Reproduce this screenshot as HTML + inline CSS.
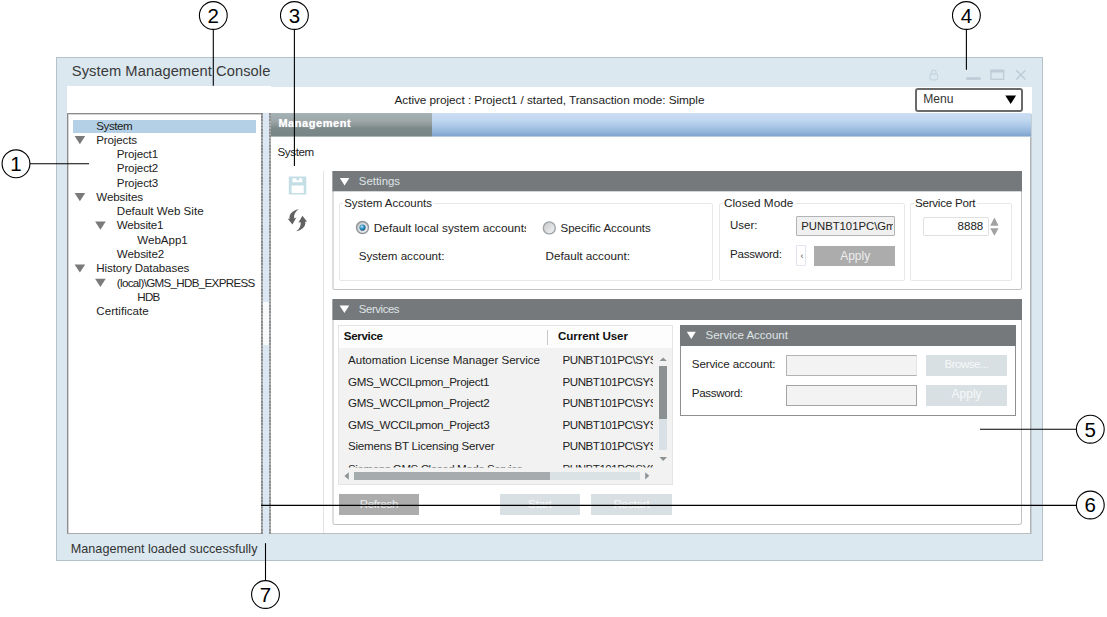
<!DOCTYPE html>
<html lang="en"><head><meta charset="utf-8"><title>System Management Console</title>
<style>
html,body{margin:0;padding:0;background:#fff;}
body{width:1107px;height:617px;position:relative;overflow:hidden;font-family:"Liberation Sans", sans-serif;}
body>div,.a{position:absolute;}
.t{position:absolute;white-space:pre;line-height:1;display:block;}
svg{display:block;overflow:visible;}
</style></head><body>
<div style="left:56px;top:57px;width:987px;height:503.5px;background:#dbe8f0;border:1px solid #b4c2cc;box-sizing:border-box;"></div>
<span class="t" style="left:71.8px;top:64px;font-size:14.7px;color:#3a3a3a;letter-spacing:0.073px;">System Management Console</span>
<svg class="a" style="left:925px;top:66px" width="106" height="18" viewBox="925 66 106 18">
<g fill="none" stroke="#c6d5e0" stroke-width="1.3">
<rect x="930" y="74" width="7.6" height="5.8" rx="1.5"/>
<path d="M931.6 74 v-1.6 a2.2 2.2 0 0 1 4.4 0 v1.6"/>
</g>
<rect x="966.3" y="77.2" width="14.3" height="2.7" fill="#bdccd7"/>
<rect x="991" y="71.6" width="12.6" height="7.7" fill="none" stroke="#bdccd7" stroke-width="1.3"/>
<rect x="990.3" y="69.5" width="14" height="2.8" fill="#bdccd7"/>
<path d="M1016.3 70.2 L1025.4 79.5 M1025.4 70.2 L1016.3 79.5" stroke="#bdccd7" stroke-width="1.4" fill="none"/>
</svg>
<div style="left:67px;top:86.5px;width:964.5px;height:27px;background:#fff;"></div>
<div style="left:67px;top:85.5px;width:204px;height:1.5px;background:#fff;"></div>
<span class="t" style="left:394.5px;top:95px;font-size:11.8px;color:#222;letter-spacing:-0.046px;">Active project : Project1 / started, Transaction mode: Simple</span>
<div style="left:915px;top:87.5px;width:108px;height:24px;background:#fff;border:2px solid #6a6a6a;border-radius:3px;box-sizing:border-box;"></div>
<span class="t" style="left:923.3px;top:93px;font-size:12.1px;color:#333;">Menu</span>
<svg class="a" style="left:1004px;top:94px" width="14" height="12" viewBox="1004 94 14 12"><path d="M1005.3 95.6 h10.8 l-5.4 8.4 z" fill="#000"/></svg>
<div style="left:67px;top:113px;width:195px;height:421px;background:#fff;border:1px solid #8c8c8c;border-bottom-color:#ababab;box-sizing:border-box;box-shadow:inset 1px 1px 0 #d4d4d4;"></div>
<div style="left:72.5px;top:119.5px;width:183px;height:13.2px;background:#b3d0e6;"></div>
<span class="t" style="left:96.3px;top:120px;font-size:11.6px;color:#222;letter-spacing:-0.471px;">System</span>
<span class="t" style="left:96.3px;top:134px;font-size:11.6px;color:#222;letter-spacing:-0.163px;">Projects</span>
<span class="t" style="left:116.8px;top:148px;font-size:11.6px;color:#222;letter-spacing:-0.176px;">Project1</span>
<span class="t" style="left:116.8px;top:162px;font-size:11.6px;color:#222;letter-spacing:-0.147px;">Project2</span>
<span class="t" style="left:116.8px;top:177px;font-size:11.6px;color:#222;letter-spacing:-0.147px;">Project3</span>
<span class="t" style="left:96.3px;top:191px;font-size:11.6px;color:#222;letter-spacing:-0.103px;">Websites</span>
<span class="t" style="left:116.8px;top:205px;font-size:11.6px;color:#222;">Default Web Site</span>
<span class="t" style="left:116.8px;top:219px;font-size:11.6px;color:#222;letter-spacing:-0.196px;">Website1</span>
<span class="t" style="left:137.3px;top:234px;font-size:11.6px;color:#222;letter-spacing:-0.036px;">WebApp1</span>
<span class="t" style="left:116.8px;top:248px;font-size:11.6px;color:#222;letter-spacing:-0.089px;">Website2</span>
<span class="t" style="left:96.3px;top:262px;font-size:11.6px;color:#222;letter-spacing:-0.108px;">History Databases</span>
<span class="t" style="left:116.8px;top:277px;font-size:11.6px;color:#222;letter-spacing:-0.675px;">(local)\GMS_HDB_EXPRESS</span>
<span class="t" style="left:137.3px;top:291px;font-size:11.6px;color:#222;letter-spacing:-0.742px;">HDB</span>
<span class="t" style="left:96.3px;top:305px;font-size:11.6px;color:#222;letter-spacing:0.030px;">Certificate</span>
<svg class="a" style="left:0;top:0" width="300" height="340" viewBox="0 0 300 340"><g fill="#7a7a7a"><path d="M74.6 136.0 h10.6 l-5.3 8.2 z"/><path d="M74.6 193.0 h10.6 l-5.3 8.2 z"/><path d="M95.1 221.6 h10.6 l-5.3 8.2 z"/><path d="M74.6 264.4 h10.6 l-5.3 8.2 z"/><path d="M95.1 278.7 h10.6 l-5.3 8.2 z"/></g></svg>
<div style="left:262px;top:113px;width:9px;height:421px;background:#dbe8f3;"></div>
<div style="left:263px;top:302.4px;width:6px;height:42.6px;background:#f7f9fb;"></div>
<div style="left:261px;top:113px;width:2px;height:421px;background:repeating-linear-gradient(#858585 0,#858585 1.6px,#a9a9a9 1.6px,#a9a9a9 3.2px);opacity:.9;"></div>
<div style="left:269px;top:113px;width:2px;height:421px;background:repeating-linear-gradient(#858585 0,#858585 1.6px,#a9a9a9 1.6px,#a9a9a9 3.2px);opacity:.9;"></div>
<div style="left:271px;top:113.5px;width:760px;height:420.5px;background:#fff;border-right:1px solid #b2b2b2;border-bottom:1px solid #bdbdbd;box-sizing:border-box;box-shadow:1px 0 0 rgba(170,175,180,.45);"></div>
<div style="left:271px;top:113px;width:760px;height:24px;background:linear-gradient(#cfe0f2 0,#c9ddf2 1px,#c3d9f0 6px,#abc8e7 13px,#8fb1d8 20px,#7fa3cc 23.2px,#b7c9df 23.2px);"></div>
<div style="left:271px;top:113px;width:160.6px;height:24px;background:linear-gradient(#aab6b9 0,#a3b1b5 1px,#9ea6a7 8px,#8e9898 12px,#7d8a8a 15px,#788585 23.2px,#aeb6b6 23.2px);"></div>
<span class="t" style="left:278.4px;top:118px;font-size:11px;color:#fff;font-weight:bold;letter-spacing:0.55px;text-shadow:0 0 1px #dfe6e6;">Management</span>
<span class="t" style="left:277.5px;top:146px;font-size:11.6px;color:#222;letter-spacing:-0.381px;">System</span>
<svg class="a" style="left:286px;top:174px" width="24" height="60" viewBox="286 174 24 60">
<path fill="#c4dee6" fill-rule="evenodd" d="M288.8 176.5 h17.5 v18.1 h-17.5 z M292.4 178.3 v4 h9.9 v-4 h-3.3 v1.9 h-2.6 v-1.9 z M291.6 185.6 v7.3 h12.1 v-7.3 z"/>
<g fill="#616161">
<path d="M298.6 209.2 C292 210.5 288.8 214.5 289.6 219 L287.6 218.6 L292.4 224.6 L296.4 217.6 L294.2 218.4 C293.6 214.8 295 211.8 298.6 209.2 Z"/>
<path d="M296.2 231.2 C302.8 229.9 306 225.9 305.2 221.4 L307.2 221.8 L302.4 215.8 L298.4 222.8 L300.6 222 C301.2 225.6 299.8 228.6 296.2 231.2 Z"/>
</g></svg>
<div style="left:323px;top:170.5px;width:707px;height:362.5px;border-left:1px solid #e4e4e4;"></div>
<div style="left:332px;top:170.5px;width:690px;height:119px;background:#fff;border:1px solid #c2c2c2;border-left:2px solid #dedede;box-sizing:border-box;border-radius:0 0 2px 2px;"></div>
<div style="left:332px;top:170.5px;width:690px;height:20.5px;background:linear-gradient(to right,rgba(117,121,123,.55) 0,rgba(117,121,123,.55) 1px,#75797b 1px);box-shadow:0 1px 0 rgba(117,121,123,.3);"></div>
<svg class="a" style="left:338px;top:176px" width="14" height="12" viewBox="338 176 14 12"><path d="M339.8 178 h9.6 l-4.8 7.4 z" fill="#fff"/></svg>
<span class="t" style="left:358.8px;top:176px;font-size:11.4px;color:#dfe4e7;letter-spacing:0.011px;">Settings</span>
<div style="left:338.7px;top:203px;width:374.5px;height:78px;border:1px solid #e8e8e8;box-sizing:border-box;border-radius:2px;"></div>
<div style="left:342.7px;top:200px;width:90.75px;height:8px;background:#fff;"></div>
<span class="t" style="left:344.2px;top:198px;font-size:11.44px;color:#222;">System Accounts</span>
<div style="left:718.5px;top:203px;width:186.2px;height:78px;border:1px solid #e8e8e8;box-sizing:border-box;border-radius:2px;"></div>
<div style="left:722.5px;top:200px;width:72.25px;height:8px;background:#fff;"></div>
<span class="t" style="left:724px;top:197px;font-size:11.75px;color:#222;">Closed Mode</span>
<div style="left:909.5px;top:203px;width:102.8px;height:78px;border:1px solid #e8e8e8;box-sizing:border-box;border-radius:2px;"></div>
<div style="left:913.5px;top:200px;width:63.5px;height:8px;background:#fff;"></div>
<span class="t" style="left:915px;top:197px;font-size:11.6px;color:#222;letter-spacing:-0.241px;">Service Port</span>
<svg class="a" style="left:354px;top:219px" width="204" height="18" viewBox="354 219 204 18">
<defs>
<radialGradient id="rg1" cx="40%" cy="35%" r="70%"><stop offset="0" stop-color="#bfe9f7"/><stop offset="0.5" stop-color="#2f8fc0"/><stop offset="1" stop-color="#0f4f7c"/></radialGradient>
<linearGradient id="rg2" x1="0" y1="0" x2="1" y2="1"><stop offset="0" stop-color="#c4c7c9"/><stop offset="1" stop-color="#f4f5f6"/></linearGradient>
</defs>
<circle cx="362.5" cy="227.6" r="6" fill="url(#rg2)" stroke="#93979a" stroke-width="1.5"/>
<circle cx="362.5" cy="227.6" r="3.1" fill="url(#rg1)"/>
<circle cx="549.3" cy="227.9" r="6" fill="url(#rg2)" stroke="#a0a4a7" stroke-width="1.4"/>
</svg>
<span class="t" style="left:373.8px;top:223px;font-size:11.8px;color:#222;width:152px;overflow:hidden;">Default local system accounts</span>
<span class="t" style="left:560.5px;top:223px;font-size:11.52px;color:#222;">Specific Accounts</span>
<span class="t" style="left:358.8px;top:250px;font-size:11.6px;color:#222;">System account:</span>
<span class="t" style="left:545.5px;top:250px;font-size:11.69px;color:#222;">Default account:</span>
<span class="t" style="left:730px;top:220px;font-size:11.5px;color:#222;">User:</span>
<span class="t" style="left:730px;top:248px;font-size:11.6px;color:#222;letter-spacing:-0.266px;">Password:</span>
<div style="left:796.3px;top:216.3px;width:98.7px;height:20px;background:#f0f0f0;border:1px solid #b1b5b8;box-sizing:border-box;border-radius:1px;"></div>
<span class="t" style="left:801.3px;top:221px;font-size:11.3px;color:#222;width:92px;overflow:hidden;">PUNBT101PC\Gmsuser</span>
<div style="left:796.3px;top:245px;width:10px;height:21.3px;background:#fff;border:1px solid #e1e5ef;box-sizing:border-box;border-radius:1px;"></div>
<span class="t" style="left:800.5px;top:252px;font-size:9px;color:#555;">‹</span>
<div style="left:814.3px;top:245.5px;width:80.7px;height:20.8px;background:#acacac;"></div>
<span class="t" style="left:755.2px;width:200px;text-align:center;top:250px;font-size:12px;color:#ececec;">Apply</span>
<div style="left:923px;top:216.7px;width:65.8px;height:19.1px;background:#fff;border:1px solid #e0e0e0;box-sizing:border-box;border-radius:2px;"></div>
<span class="t" style="right:123.7px;top:221px;font-size:11.57px;color:#222;">8888</span>
<svg class="a" style="left:988px;top:216px" width="14" height="22" viewBox="988 216 14 22"><g fill="#a2a2a2"><path d="M990.2 225.8 h8.4 l-4.2 -8.2 z"/><path d="M990.2 228.2 h8.4 l-4.2 7.6 z"/></g></svg>
<div style="left:332px;top:299.5px;width:690px;height:225.2px;background:#fff;border:1px solid #c2c2c2;border-left:2px solid #dedede;box-sizing:border-box;border-radius:0 0 3px 3px;"></div>
<div style="left:332px;top:299px;width:690px;height:21.4px;background:linear-gradient(to right,rgba(117,121,123,.55) 0,rgba(117,121,123,.55) 1px,#75797b 1px);"></div>
<svg class="a" style="left:338px;top:304px" width="14" height="12" viewBox="338 304 14 12"><path d="M339.6 305.6 h9.6 l-4.8 7.4 z" fill="#fff"/></svg>
<span class="t" style="left:358.8px;top:304px;font-size:11.4px;color:#dfe4e7;letter-spacing:-0.420px;">Services</span>
<div style="left:338px;top:325.2px;width:334.7px;height:159.5px;background:#f2f2f2;border:1px solid #e4e4e4;box-sizing:border-box;"></div>
<div style="left:339px;top:326.2px;width:332.7px;height:21.8px;background:#fdfdfd;"></div>
<span class="t" style="left:343.8px;top:330px;font-size:11.6px;color:#111;font-weight:bold;letter-spacing:-0.336px;">Service</span>
<div style="left:547px;top:329.5px;width:1.3px;height:15.2px;background:#c9c9c9;"></div>
<span class="t" style="left:558px;top:330px;font-size:11.6px;color:#111;font-weight:bold;letter-spacing:-0.080px;">Current User</span>
<div class="a" style="left:0;top:0;width:1107px;height:617px;clip-path:inset(347px 450px 149.5px 339px);">
<span class="t" style="left:348px;top:354px;font-size:11.6px;color:#222;letter-spacing:-0.021px;">Automation License Manager Service</span>
<span class="t" style="left:562.5px;top:354px;font-size:11.6px;color:#222;width:90.6px;overflow:hidden;letter-spacing:-0.478px;">PUNBT101PC\SYSTEM</span>
<span class="t" style="left:348px;top:376px;font-size:11.6px;color:#222;letter-spacing:-0.319px;">GMS_WCCILpmon_Project1</span>
<span class="t" style="left:562.5px;top:376px;font-size:11.6px;color:#222;width:90.6px;overflow:hidden;letter-spacing:-0.478px;">PUNBT101PC\SYSTEM</span>
<span class="t" style="left:348px;top:397px;font-size:11.6px;color:#222;letter-spacing:-0.310px;">GMS_WCCILpmon_Project2</span>
<span class="t" style="left:562.5px;top:397px;font-size:11.6px;color:#222;width:90.6px;overflow:hidden;letter-spacing:-0.478px;">PUNBT101PC\SYSTEM</span>
<span class="t" style="left:348px;top:419px;font-size:11.6px;color:#222;letter-spacing:-0.310px;">GMS_WCCILpmon_Project3</span>
<span class="t" style="left:562.5px;top:419px;font-size:11.6px;color:#222;width:90.6px;overflow:hidden;letter-spacing:-0.478px;">PUNBT101PC\SYSTEM</span>
<span class="t" style="left:348px;top:440px;font-size:11.6px;color:#222;letter-spacing:-0.231px;">Siemens BT Licensing Server</span>
<span class="t" style="left:562.5px;top:440px;font-size:11.6px;color:#222;width:90.6px;overflow:hidden;letter-spacing:-0.478px;">PUNBT101PC\SYSTEM</span>
<span class="t" style="left:348px;top:463px;font-size:11.6px;color:#222;letter-spacing:-0.439px;">Siemens GMS Closed Mode Service</span>
<span class="t" style="left:562.5px;top:463px;font-size:11.6px;color:#222;width:90.6px;overflow:hidden;letter-spacing:-0.478px;">PUNBT101PC\SYSTEM</span>
</div>
<div style="left:659.3px;top:366.3px;width:7.7px;height:83.3px;background:#d9e1e6;"></div>
<div style="left:659.3px;top:366.3px;width:7.7px;height:52.5px;background:#8b9093;"></div>
<svg class="a" style="left:658px;top:355px" width="12" height="100" viewBox="658 355 12 100"><g fill="#8e9396"><path d="M659.6 361 h7.2 l-3.6 -3.6 z"/><path d="M659.4 457 h7.6 l-3.8 4 z"/></g></svg>
<div style="left:353.7px;top:472px;width:286.5px;height:8px;background:#dbe2e6;"></div>
<div style="left:353.7px;top:472px;width:196.3px;height:8px;background:#a6abae;"></div>
<svg class="a" style="left:342px;top:470px" width="322" height="12" viewBox="342 470 322 12"><g fill="#8e9396"><path d="M348.8 472.3 v7.4 l-4.4 -3.7 z"/><path d="M645.2 472.2 v7.2 l4.1 -3.6 z"/></g></svg>
<div style="left:338.8px;top:494.3px;width:80.5px;height:20.7px;background:#acacac;"></div>
<span class="t" style="left:279.05px;width:200px;text-align:center;top:498px;font-size:11.6px;color:#eeeeee;letter-spacing:-0.310px;text-indent:-0.310px;">Refresh</span>
<div style="left:499.7px;top:494.3px;width:80.7px;height:20.7px;background:#d8e0e3;"></div>
<span class="t" style="left:440.05px;width:200px;text-align:center;top:498px;font-size:11.6px;color:#f6f8f9;letter-spacing:-0.146px;text-indent:-0.146px;">Start</span>
<div style="left:591.2px;top:494.3px;width:80.8px;height:20.7px;background:#d8e0e3;"></div>
<span class="t" style="left:531.6px;width:200px;text-align:center;top:498px;font-size:11.6px;color:#f6f8f9;letter-spacing:-0.163px;text-indent:-0.163px;">Restart</span>
<div style="left:679.5px;top:325px;width:336.5px;height:91px;background:#fff;border:1px solid #8f8f8f;box-sizing:border-box;"></div>
<div style="left:679.5px;top:325px;width:336.5px;height:20.6px;background:#75797b;"></div>
<svg class="a" style="left:685px;top:330px" width="14" height="12" viewBox="685 330 14 12"><path d="M686.8 331.8 h9 l-4.5 7.2 z" fill="#fff"/></svg>
<span class="t" style="left:705.5px;top:330px;font-size:11.5px;color:#dfe4e7;">Service Account</span>
<span class="t" style="left:691.8px;top:358px;font-size:11.6px;color:#222;letter-spacing:-0.131px;">Service account:</span>
<span class="t" style="left:691.8px;top:387px;font-size:11.6px;color:#222;letter-spacing:-0.359px;">Password:</span>
<div style="left:785.7px;top:354.5px;width:131.8px;height:21.3px;background:#f3f3f3;border:1px solid #b3b3b3;box-sizing:border-box;border-right-color:#e3e3e3;"></div>
<div style="left:785.7px;top:384.5px;width:131.6px;height:21.1px;background:#f3f3f3;border:1px solid #a3a3a3;box-sizing:border-box;"></div>
<div style="left:926.3px;top:354.5px;width:80.5px;height:21.3px;background:#d8e0e3;"></div>
<span class="t" style="left:866.55px;width:200px;text-align:center;top:358px;font-size:11.6px;color:#f6f8f9;letter-spacing:-0.510px;text-indent:-0.510px;">Browse...</span>
<div style="left:926.3px;top:384.5px;width:80.5px;height:21.1px;background:#d8e0e3;"></div>
<span class="t" style="left:866.55px;width:200px;text-align:center;top:388px;font-size:12px;color:#f6f8f9;">Apply</span>
<span class="t" style="left:70.8px;top:543px;font-size:12.63px;color:#333;">Management loaded successfully</span>
<svg class="a" style="left:0;top:0" width="1107" height="617" viewBox="0 0 1107 617"><g stroke="#000" stroke-width="1.1" fill="none"><path d="M213.3 29.5 L213.3 85.8"/><path d="M294.4 29.5 L294.4 166"/><path d="M966.4 29.5 L966.4 69.8"/><path d="M30 163.8 L89 163.8"/><path d="M980 429.3 L1076.3 429.3"/><path d="M261 505.4 L1076.3 505.4"/><path d="M265.5 543.2 L265.5 580.5"/></g><circle cx="16" cy="163.8" r="13.9" fill="#fff" stroke="#000" stroke-width="1.1"/><text x="16" y="171.10000000000002" text-anchor="middle" font-family='"Liberation Sans", sans-serif' font-size="20.5" fill="#000">1</text><circle cx="213.3" cy="15.5" r="13.9" fill="#fff" stroke="#000" stroke-width="1.1"/><text x="213.3" y="22.8" text-anchor="middle" font-family='"Liberation Sans", sans-serif' font-size="20.5" fill="#000">2</text><circle cx="294.4" cy="15.5" r="13.9" fill="#fff" stroke="#000" stroke-width="1.1"/><text x="294.4" y="22.8" text-anchor="middle" font-family='"Liberation Sans", sans-serif' font-size="20.5" fill="#000">3</text><circle cx="966.4" cy="15.5" r="13.9" fill="#fff" stroke="#000" stroke-width="1.1"/><text x="966.4" y="22.8" text-anchor="middle" font-family='"Liberation Sans", sans-serif' font-size="20.5" fill="#000">4</text><circle cx="1090.3" cy="429.2" r="13.9" fill="#fff" stroke="#000" stroke-width="1.1"/><text x="1090.3" y="436.5" text-anchor="middle" font-family='"Liberation Sans", sans-serif' font-size="20.5" fill="#000">5</text><circle cx="1090.3" cy="505" r="13.9" fill="#fff" stroke="#000" stroke-width="1.1"/><text x="1090.3" y="512.3" text-anchor="middle" font-family='"Liberation Sans", sans-serif' font-size="20.5" fill="#000">6</text><circle cx="265.5" cy="594.5" r="13.9" fill="#fff" stroke="#000" stroke-width="1.1"/><text x="265.5" y="601.8" text-anchor="middle" font-family='"Liberation Sans", sans-serif' font-size="20.5" fill="#000">7</text></svg>
</body></html>
